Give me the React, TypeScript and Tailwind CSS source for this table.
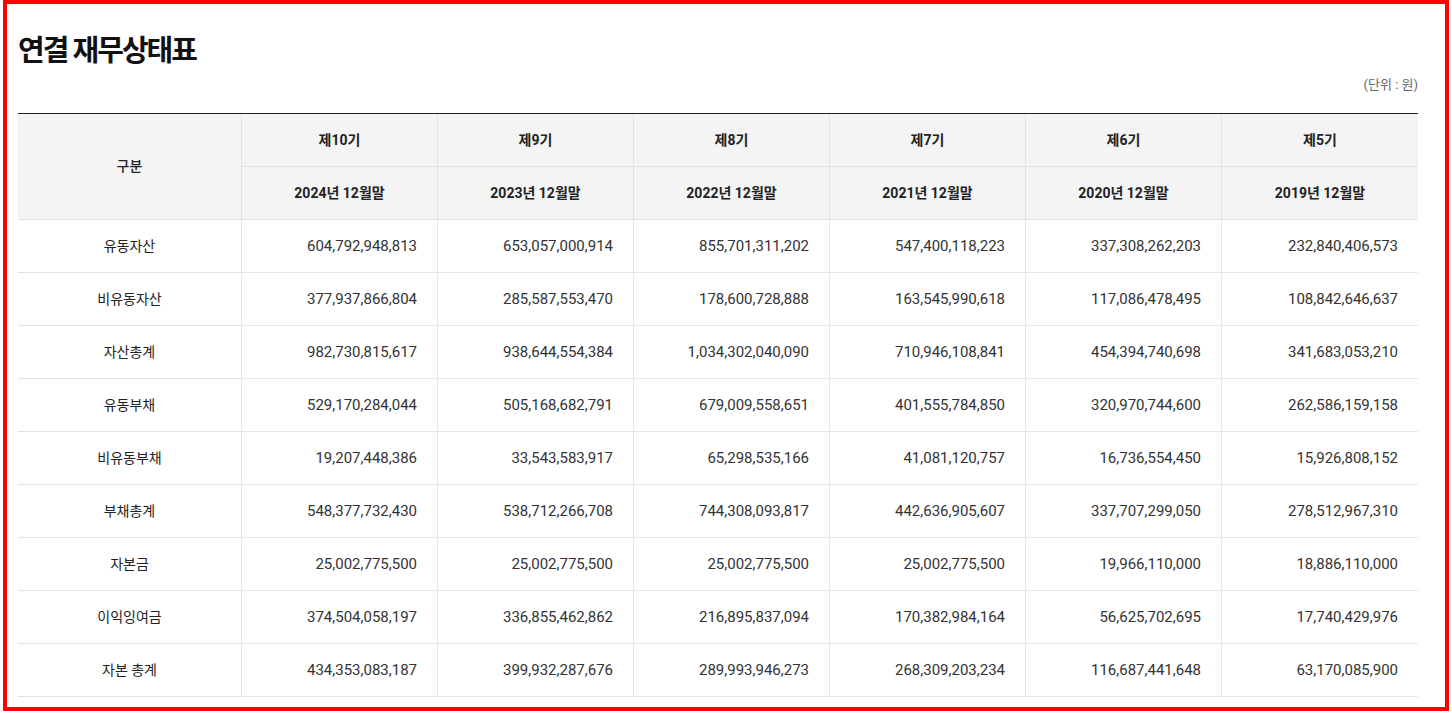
const periods = [
  { term: '제10기', date: '2024년 12월말' },
  { term: '제9기', date: '2023년 12월말' },
  { term: '제8기', date: '2022년 12월말' },
  { term: '제7기', date: '2021년 12월말' },
  { term: '제6기', date: '2020년 12월말' },
  { term: '제5기', date: '2019년 12월말' }
]

const rows: { label: string; values: string[] }[] = [
  {
    label: '유동자산',
    values: ['604,792,948,813', '653,057,000,914', '855,701,311,202', '547,400,118,223', '337,308,262,203', '232,840,406,573']
  },
  {
    label: '비유동자산',
    values: ['377,937,866,804', '285,587,553,470', '178,600,728,888', '163,545,990,618', '117,086,478,495', '108,842,646,637']
  },
  {
    label: '자산총계',
    values: ['982,730,815,617', '938,644,554,384', '1,034,302,040,090', '710,946,108,841', '454,394,740,698', '341,683,053,210']
  },
  {
    label: '유동부채',
    values: ['529,170,284,044', '505,168,682,791', '679,009,558,651', '401,555,784,850', '320,970,744,600', '262,586,159,158']
  },
  {
    label: '비유동부채',
    values: ['19,207,448,386', '33,543,583,917', '65,298,535,166', '41,081,120,757', '16,736,554,450', '15,926,808,152']
  },
  {
    label: '부채총계',
    values: ['548,377,732,430', '538,712,266,708', '744,308,093,817', '442,636,905,607', '337,707,299,050', '278,512,967,310']
  },
  {
    label: '자본금',
    values: ['25,002,775,500', '25,002,775,500', '25,002,775,500', '25,002,775,500', '19,966,110,000', '18,886,110,000']
  },
  {
    label: '이익잉여금',
    values: ['374,504,058,197', '336,855,462,862', '216,895,837,094', '170,382,984,164', '56,625,702,695', '17,740,429,976']
  },
  {
    label: '자본 총계',
    values: ['434,353,083,187', '399,932,287,676', '289,993,946,273', '268,309,203,234', '116,687,441,648', '63,170,085,900']
  }
]

export default function App() {
  return (
    <div className="ml-[3px] h-[711px] w-[1446px] overflow-hidden border-4 border-[#ff0000] bg-white font-['Roboto','Noto_Sans_CJK_KR',sans-serif]">
      <div className="w-[1411px] pl-[11px]">
        <h2 className="pt-[29px] text-[29px] leading-[36px] font-bold tracking-[-2px] text-[#111]">
          연결 재무상태표
        </h2>
        <p className="mt-[6px] text-right text-[13px] leading-[20px] text-[#666]">(단위 : 원)</p>
        <table className="mt-[18px] w-[1400px] table-fixed border-separate border-spacing-0 border-t border-[#222]">
          <colgroup>
            <col className="w-[223px]" />
            <col className="w-[196px]" />
            <col className="w-[196px]" />
            <col className="w-[196px]" />
            <col className="w-[196px]" />
            <col className="w-[196px]" />
            <col className="w-[197px]" />
          </colgroup>
          <thead>
            <tr>
              <th
                rowSpan={2}
                className="border-b border-[#dde3e8] bg-[#f4f4f4] text-[14px] font-medium text-[#222]"
              >
                구분
              </th>
              {periods.map((p) => (
                <th
                  key={p.term}
                  className="h-[53px] border-b border-l border-[#dde3e8] bg-[#f4f4f4] text-[14px] font-bold text-[#222]"
                >
                  {p.term}
                </th>
              ))}
            </tr>
            <tr>
              {periods.map((p) => (
                <th
                  key={p.date}
                  className="h-[53px] border-b border-l border-[#dde3e8] bg-[#f4f4f4] text-[14px] font-bold text-[#222]"
                >
                  {p.date}
                </th>
              ))}
            </tr>
          </thead>
          <tbody>
            {rows.map((row) => (
              <tr key={row.label}>
                <td className="h-[53px] border-b border-[#dde3e8] text-center text-[14px] text-[#222]">
                  {row.label}
                </td>
                {row.values.map((v, i) => (
                  <td
                    key={i}
                    className="h-[53px] border-b border-l border-[#e4e8ec] pr-5 text-right text-[15px] text-[#333]"
                  >
                    {v}
                  </td>
                ))}
              </tr>
            ))}
          </tbody>
        </table>
      </div>
    </div>
  )
}
